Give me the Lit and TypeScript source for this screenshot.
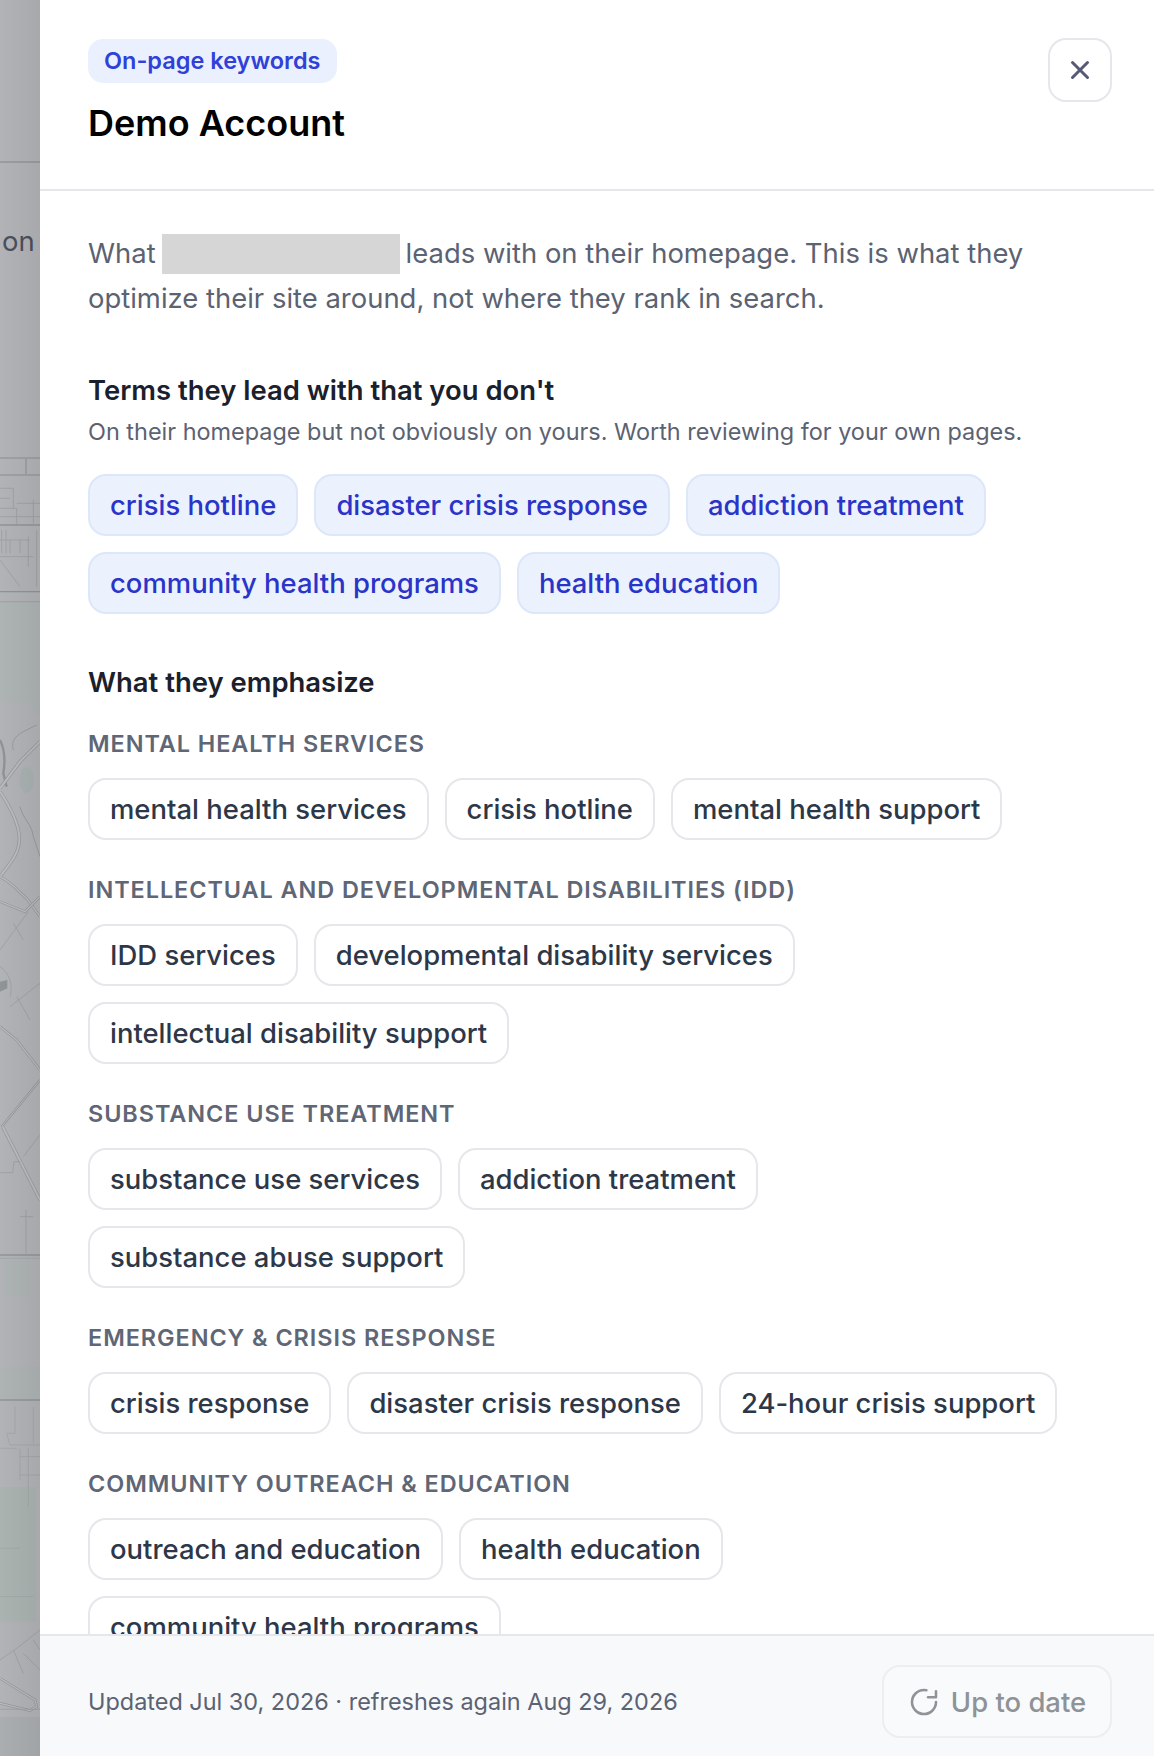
import { LitElement, html, css, svg } from "lit";
import { customElement } from "lit/decorators.js";

const groups: [string, string[]][] = [
  ["Mental health services", ["mental health services", "crisis hotline", "mental health support"]],
  ["Intellectual and developmental disabilities (IDD)", ["IDD services", "developmental disability services", "intellectual disability support"]],
  ["Substance use treatment", ["substance use services", "addiction treatment", "substance abuse support"]],
  ["Emergency & crisis response", ["crisis response", "disaster crisis response", "24-hour crisis support"]],
  ["Community outreach & education", ["outreach and education", "health education", "community health programs"]],
];
const gaps = ["crisis hotline", "disaster crisis response", "addiction treatment", "community health programs", "health education"];

const road = (d: string, w = 8) => svg`<path d=${d} stroke="#94979a" stroke-width=${w}/><path d=${d} stroke="#b9bbbd" stroke-width=${w - 4}/>`;
const thin = (d: string, c = "#9c9fa2", w = 2.5) => svg`<path d=${d} stroke=${c} stroke-width=${w}/>`;

@customElement("app-root")
export class AppRoot extends LitElement {
  static styles = css`
    :host { display: flex; width: 1154px; height: 1756px; overflow: hidden; font-family: Inter, "Liberation Sans", sans-serif; background: #fff; }
    .backdrop { width: 40px; flex: none; position: relative; background: #b1b3b6; overflow: hidden; }
    .backdrop svg { position: absolute; inset: 0; }
    .on { position: absolute; left: 2px; top: 223px; font-size: 27.44px; line-height: 36px; color: #4a4f5c; }
    .shade { position: absolute; inset: 0; background: linear-gradient(90deg, rgba(0,0,0,0), rgba(0,0,0,.06)); }
    .panel { flex: 1; min-width: 0; display: flex; flex-direction: column; height: 1756px; background: #fff; }
    header { height: 191px; box-sizing: border-box; flex: none; border-bottom: 2px solid #e5e7eb; padding: 38px 42px 0 48px; display: flex; justify-content: space-between; align-items: flex-start; }
    .badge { display: inline-block; height: 44px; line-height: 44px; margin-top: 1px; padding: 0 16.5px 0 16px; border-radius: 15px; background: #eaf0fd; color: #3040d8; font-size: 23.5px; font-weight: 600; }
    h1 { margin: 16px 0 0; font-size: 36px; line-height: 48px; font-weight: 600; color: #000; }
    .close { width: 64px; height: 64px; box-sizing: border-box; border: 2px solid #e5e7eb; border-radius: 18px; background: #fff; display: flex; align-items: center; justify-content: center; padding: 0; }
    main { flex: 1; min-height: 0; overflow: hidden; padding: 40px 42px 0 48px; }
    .intro { margin: 0; font-size: 27.44px; line-height: 45px; color: #5b6272; }
    .redact { display: inline-block; width: 238px; height: 40px; margin: 0 -2.5px 0 -1px; background: #d6d6d6; vertical-align: -10.5px; }
    h2 { margin: 0; font-size: 27.44px; line-height: 40px; font-weight: 600; color: #1a202c; }
    h2.first { margin-top: 49px; margin-bottom: 4px; }
    h2.second { margin-top: 48px; }
    .sub { margin: 0; font-size: 23.44px; line-height: 36px; color: #5b6272; }
    .chips { display: flex; flex-wrap: wrap; gap: 16px; }
    .chips.top { margin-top: 24px; }
    .chip { box-sizing: border-box; height: 62px; line-height: 58px; padding: 0 20px; border: 2px solid #e5e7eb; border-radius: 18px; background: #fff; font-size: 27.44px; font-weight: 500; color: #2d3748; white-space: nowrap; }
    .chip.gap { background: #ebf1fd; border-color: #dde7fa; color: #2a34c8; }
    .label { margin: 34px 0 18px; font-size: 23.44px; line-height: 32px; font-weight: 600; letter-spacing: .04em; text-transform: uppercase; color: #5f6675; }
    .label.first { margin-top: 26px; }
    footer { height: 122px; box-sizing: border-box; flex: none; border-top: 2px solid #e5e7eb; background: #f7f9fb; padding: 29px 42px 18px 48px; display: flex; align-items: center; justify-content: space-between; }
    .stamp { font-size: 23.44px; color: #5b6272; }
    .refresh { height: 73px; width: 230px; box-sizing: border-box; border: 2px solid #eceef1; border-radius: 18px; background: #f8fafb; display: flex; align-items: center; justify-content: center; gap: 11px; font: 500 27.44px Inter, "Liberation Sans", sans-serif; color: #8f9296; padding: 0; }
  `;

  private map() {
    return svg`<svg width="40" height="1756" viewBox="0 0 40 1756" fill="none">
      <path d="M0 162H40" stroke="#9a9da0" stroke-width="2"/>
      <rect x="0" y="602" width="40" height="100" fill="#adb4b3"/>
      <path d="M0 660L40 718V700L0 640Z" fill="#adb4b3"/>
      <rect x="0" y="1367" width="40" height="33" fill="#adb4b3"/>
      <rect x="3" y="1260" width="27" height="37" fill="#adb4b3"/>
      <rect x="0" y="1487" width="36" height="135" fill="#abb3b1"/>
      <rect x="0" y="1717" width="40" height="39" fill="#abaeb1"/>
      <path d="M0 458H40M0 475H40M26 458V475" stroke="#9ea1a4" stroke-width="2"/>
      <g transform="translate(0,420) scale(.3333)">
        ${thin("M0 205H40V265M0 235H30M0 265H50V315M50 250H120M100 240V310M0 290H120")}
        ${thin("M0 315H120", "#919497", 5)}
        ${thin("M5 330V400M18 330V400M30 360V400M60 360V400M85 350V440M110 330V500M0 360H90M0 410H100M0 420L60 500")}
        ${thin("M0 515H120", "#909396", 4)}
        ${thin("M0 545H120", "#9ea1a4", 3)}
      </g>
      <g transform="translate(0,720) scale(.3333)">
        <ellipse cx="80" cy="180" rx="22" ry="38" fill="#a9b2b0"/>
        <path d="M0 815V785L22 780V805Z" fill="#8f9496"/>
        <path d="M0 60C15 90 15 130 10 160L20 200" stroke="#8e9296" stroke-width="7"/>
        <path d="M40 90C30 50 60 40 110 15M60 260C70 300 95 310 100 350L120 410" stroke="#989b9e" stroke-width="3"/>
        ${road("M0 205L60 125L120 65", 10)}
        ${road("M0 215C30 260 55 310 58 350C60 400 30 430 0 470", 10)}
        ${road("M0 470C40 490 60 520 80 535L120 590", 8)}
        ${road("M0 545L75 575L120 530", 8)}
        ${thin("M0 690L85 575M40 610L70 660M0 740C30 760 40 800 30 830M30 860L120 790M50 830L90 900")}
      </g>
      <g transform="translate(0,1020) scale(.3333)">
        ${road("M0 20L50 60L120 150", 8)}
        ${road("M5 320L120 180", 7)}
        ${road("M8 320L120 540", 10)}
        ${thin("M0 458H38L42 425H60M70 410L120 345M78 570V700M60 590H100")}
        ${thin("M0 705H120", "#919497", 4)}
        ${thin("M0 715H120", "#9ea1a4", 2)}
      </g>
      <g transform="translate(0,1320) scale(.3333)">
        ${thin("M0 240H120", "#919497", 4)}
        ${thin("M45 260V340L20 340L30 375H120M100 260V370M60 385V480M85 385V560M0 385H50M60 410H120M60 465H120M0 685H60M0 830H100", "#9ea1a4", 2)}
        ${road("M0 1075L105 1140L110 1160L90 1172L0 1150", 8)}
        ${thin("M0 1020L50 985L120 930M40 990L70 1060M70 1000L120 1050M100 960L120 990M0 1168H120")}
      </g>
    </svg>`;
  }

  render() {
    return html`
      <div class="backdrop">
        ${this.map()}
        <div class="on">on</div>
        <div class="shade"></div>
      </div>
      <div class="panel">
        <header>
          <div>
            <span class="badge">On-page keywords</span>
            <h1>Demo Account</h1>
          </div>
          <button class="close" aria-label="Close">
            <svg width="20" height="20" viewBox="0 0 20 20" fill="none" stroke="#565a75" stroke-width="3" stroke-linecap="round"><path d="M2.5 2.5L17.5 17.5M17.5 2.5L2.5 17.5"/></svg>
          </button>
        </header>
        <main>
          <p class="intro">What <span class="redact"></span> leads with on their homepage. This is what they optimize their site around, not where they rank in search.</p>
          <h2 class="first">Terms they lead with that you don't</h2>
          <p class="sub">On their homepage but not obviously on yours. Worth reviewing for your own pages.</p>
          <div class="chips top">${gaps.map((g) => html`<span class="chip gap">${g}</span>`)}</div>
          <h2 class="second">What they emphasize</h2>
          ${groups.map(([l, items], i) => html`
            <div class="label ${i === 0 ? "first" : ""}">${l}</div>
            <div class="chips">${items.map((t) => html`<span class="chip">${t}</span>`)}</div>
          `)}
        </main>
        <footer>
          <span class="stamp">Updated Jul 30, 2026 · refreshes again Aug 29, 2026</span>
          <button class="refresh" disabled>
            <svg width="32" height="32" viewBox="0 0 24 24" fill="none" stroke="#8f9296" stroke-width="1.9" stroke-linecap="round" stroke-linejoin="round"><path d="M21 12a9 9 0 1 1-9-9c.6 0 1.2.06 1.8.18"/><path d="M21 4v4.5h-6"/></svg>
            Up to date
          </button>
        </footer>
      </div>
    `;
  }
}
